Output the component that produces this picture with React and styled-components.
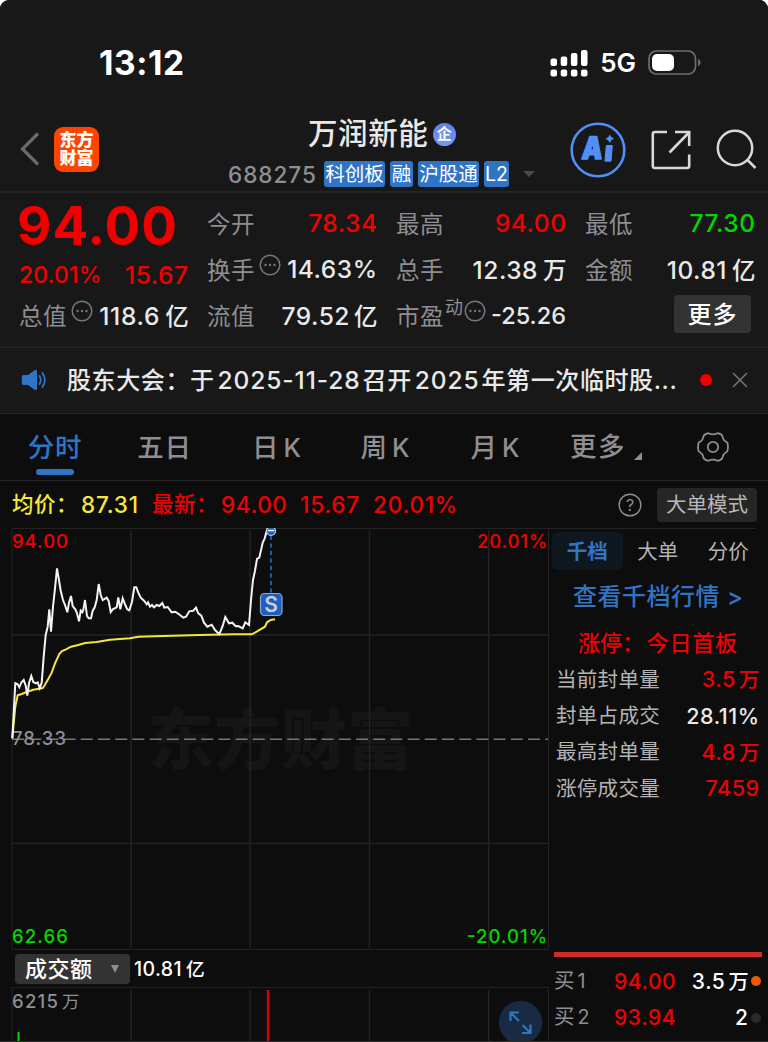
import styled, {createGlobalStyle} from "styled-components";

const GlobalStyle = createGlobalStyle`
  * {
    box-sizing: border-box;
  }

  body {
    margin: 0;
    background: #fff;
    font-family: Inter, "Noto Sans CJK SC", sans-serif;
  }

  svg {
    display: block;
    flex: none;
  }
`;

const Screen = styled.div`
  width: 768px;
  height: 1042px;
  overflow: hidden;
  background: #0d0d0d;
  border-radius: 9px 9px 0 0;
  border-bottom: 1px solid #303030;
  color: #e9e9e9;
  white-space: nowrap;
`;

const Text = styled.span`
  display: block;
  flex: none;
  font-size: ${({$size}) => $size}px;
  font-weight: ${({$weight}) => $weight || 500};
  color: ${({$color}) => $color || "#e9e9e9"};
  letter-spacing: ${({$ls}) => $ls || 0}px;
  margin-right: ${({$ls}) => -($ls || 0)}px;
  line-height: 1.2;
`;

// status bar

const StatusBar = styled.div`
  height: 110px;
  padding: 16px 67px 0 99px;
  display: flex;
  align-items: center;
  justify-content: space-between;
  background: #181818;
`;

const StatusIcons = styled.div`
  display: flex;
  align-items: center;
  gap: 12px;
`;

// header

const Header = styled.header`
  height: 83px;
  padding: 0 11px 0 20px;
  display: flex;
  background: #181818;
  border-bottom: 2px solid #252525;
`;

const HeaderLeft = styled.div`
  width: 208px;
  display: flex;
  align-items: center;
  gap: 14px;
  padding-bottom: 3px;
`;

const Logo = styled.div`
  width: 45px;
  height: 45px;
  border-radius: 9px;
  background: #ff4400;
  color: #fff;
  font-size: 17px;
  font-weight: 800;
  line-height: 18.5px;
  text-align: center;
  padding-top: 4px;
  white-space: pre-line;
`;

const HeaderCenter = styled.div`
  width: 308px;
  padding-top: 6px;
`;

const TitleRow = styled.div`
  height: 36px;
  display: flex;
  align-items: center;
  gap: 5px;
  padding-left: 80px;
`;

const Badge = styled.span`
  width: 23px;
  height: 23px;
  border-radius: 50%;
  background: linear-gradient(#5c80ee, #7598f2);
  color: #fff;
  font-size: 15px;
  font-weight: 700;
  line-height: 22px;
  text-align: center;
`;

const TagRow = styled.div`
  height: 44px;
  display: flex;
  align-items: center;
  gap: 5px;
`;

const Code = styled.div`
  width: 91px;
`;

const Tag = styled.span`
  width: ${({$w}) => $w}px;
  height: 26px;
  border-radius: 3px;
  background: #3074c6;
  color: #fff;
  font-size: 19.5px;
  line-height: 26px;
  text-align: center;
`;

const Caret = styled.span`
  margin-left: 9px;
  border: 6.5px solid transparent;
  border-top-color: #4a4a4a;
  border-bottom: 0;
`;

const HeaderRight = styled.div`
  flex: 1;
  display: flex;
  align-items: center;
  justify-content: space-between;
  padding: 0 0 2px 34px;
`;

// quote

const Quote = styled.section`
  height: 155px;
  padding: 7px 13px 0 19px;
  display: grid;
  grid-template-columns: 169px 170px 170px 170px;
  grid-template-rows: repeat(3, 46px);
  column-gap: 19px;
  background: #181818;
  border-bottom: 2px solid #202020;
`;

const PriceBlock = styled.div`
  grid-row: span 2;
  display: flex;
  flex-direction: column;
`;

const Price = styled.div`
  flex: none;
  height: 52px;
  margin-left: -2px;
  font-size: 53px;
  font-weight: 750;
  line-height: 53px;
  letter-spacing: 1px;
  color: #f00000;
`;

const Change = styled.div`
  flex: none;
  height: 46px;
  display: flex;
  align-items: center;
  justify-content: space-between;
`;

const Cell = styled.div`
  display: flex;
  align-items: center;
  justify-content: space-between;
`;

const Label = styled.span`
  display: flex;
  align-items: center;
  font-size: 23.5px;
  letter-spacing: 0.5px;
  color: #8e8e93;

  svg {
    margin: -9px 0 0 4px;
  }
`;

const Sup = styled.sup`
  font-size: 18px;
  line-height: 18px;
  margin: -14px -4px 0 1px;
`;

const Num = styled.span`
  font-size: ${({$size}) => $size || 24.5}px;
  font-weight: 500;
  letter-spacing: ${({$ls}) => $ls ?? 0.5}px;
  margin-right: ${({$ls}) => -($ls ?? 0.5)}px;
  color: ${({$color}) => $color || "#e9e9e9"};
`;

const Unit = styled.span`
  margin-left: ${({$gap}) => $gap || 4}px;
  letter-spacing: 0;
  font-size: 0.96em;
`;

const MoreButton = styled.button`
  width: 77px;
  height: 38px;
  margin: -3px 4px 0 auto;
  padding: 0;
  border: 0;
  border-radius: 4px;
  background: #333;
  color: #fff;
  font: 500 24px/39px Inter, "Noto Sans CJK SC", sans-serif;
  letter-spacing: 1px;
`;

// notice

const Notice = styled.div`
  height: 66px;
  padding: 0 20px 1px 21px;
  display: flex;
  align-items: center;
  background: #181818;
  border-bottom: 1px solid #262626;
`;

const NoticeText = styled.div`
  flex: none;
  width: 653px;
  padding: 0 0 3px 20px;
  font-size: 24px;
  font-weight: 500;
  letter-spacing: 0.6px;
`;

const Digits = styled.span`
  margin: 0 2px 0 3px;
  font-size: 24.5px;
  letter-spacing: 0.9px;
`;

const CloseButton = styled.div`
  flex: none;
  margin-left: 20px;
`;

const Dot = styled.span`
  flex: none;
  width: ${({$size}) => $size}px;
  height: ${({$size}) => $size}px;
  border-radius: 50%;
  background: ${({$color}) => $color};
`;

// period tabs

const Tabs = styled.nav`
  height: 67px;
  display: flex;
  border-bottom: 1px solid #262626;
`;

const Tab = styled.div`
  width: ${({$w}) => $w}px;
  padding-top: 16px;
  display: flex;
  flex-direction: column;
  align-items: center;
  font-size: 26.5px;
  font-weight: 500;
  line-height: 34px;
  letter-spacing: 0.8px;
  color: ${({$active}) => $active ? "#3074c6" : "#8e8e93"};

  &:after {
    content: "";
    width: 38px;
    height: 6px;
    margin-top: 5px;
    border-radius: 3px;
    background: ${({$active}) => $active ? "#3074c6" : "transparent"};
  }
`;

const TabMore = styled.div`
  width: 86px;
  height: 66px;
  margin-left: 16px;
  display: flex;
  align-items: center;
  gap: 9px;
`;

const Corner = styled.span`
  margin-top: 18px;
  border-style: solid;
  border-width: 0 0 8px 8px;
  border-color: transparent transparent #8e8e93;
`;

const Gear = styled.div`
  padding: 17px 0 0 40.5px;
`;

// info line above the chart

const InfoRow = styled.div`
  height: 47px;
  padding: 0 11px 0 12px;
  display: flex;
  align-items: center;
`;

const InfoItem = styled.div`
  width: ${({$w}) => $w}px;
`;

const ModeButton = styled.button`
  width: 100px;
  height: 34px;
  margin: 1px 0 0 15px;
  padding: 0;
  border: 0;
  border-radius: 4px;
  background: #262626;
  color: #b8b8b8;
  font: 400 20.5px/34px Inter, "Noto Sans CJK SC", sans-serif;
`;

// body

const Body = styled.div`
  height: 514px;
  display: flex;
`;

const ChartColumn = styled.div`
  width: 549px;
`;

const VolumeHeader = styled.div`
  height: 37px;
  padding: 1px 0 0 15px;
  display: flex;
  align-items: center;
  gap: 4px;
`;

const Select = styled.div`
  width: 115px;
  height: 30px;
  padding: 0 11px 0 10px;
  display: flex;
  align-items: center;
  justify-content: space-between;
  border-radius: 4px;
  background: #333;

  &:after {
    content: "";
    border: 4.5px solid transparent;
    border-top: 8px solid #8e8e93;
    border-bottom: 0;
  }
`;

const VolumeTotal = styled.div`
  padding-top: 2px;
`;

const Side = styled.aside`
  width: 219px;
  display: flex;
  flex-direction: column;
`;

const SideTabs = styled.div`
  width: 207px;
  height: 43px;
  padding: 3px 0 0 3px;
  border-top: 1px solid #242424;
  display: flex;
`;

const SideTab = styled.div`
  width: 70.5px;
  height: 38px;
  flex: none;
  border-radius: 6px;
  background: ${({$active}) => $active ? "#10181f" : "none"};
  color: ${({$active}) => $active ? "#3074c6" : "#b4b4b4"};
  font-size: 20.5px;
  font-weight: ${({$active}) => $active ? 700 : 400};
  line-height: 40px;
  text-align: center;
`;

const SideLink = styled.div`
  height: 53px;
  padding-left: 24px;
  display: flex;
  align-items: center;
`;

const LimitTitle = styled.div`
  height: 38px;
  padding-left: 29px;
  display: flex;
  align-items: center;
  justify-content: space-between;
  padding-right: 31px;
`;

const Stat = styled.div`
  height: 36.3px;
  padding: 0 9px 0 7px;
  display: flex;
  align-items: center;
  justify-content: space-between;
`;

const Orders = styled.div`
  margin: auto 0 6px;
  padding-left: 5px;
`;

const OrderBar = styled.div`
  width: 208px;
  height: 5px;
  margin-bottom: 6px;
  background: #cc2c2c;
`;

const Order = styled.div`
  height: 36.5px;
  display: grid;
  grid-template-columns: 60px 62px 72px 13px;
  align-items: center;
`;

const Right = styled.div`
  display: flex;
  justify-content: flex-end;
`;

const RED = "#f00000";
const GREEN = "#00d900";
const GREY = "#8e8e93";

const PRICE = [
    [37, 655], [46, 490], [53, 493], [58, 502], [64, 488], [71, 480], [77, 497], [82, 527], [87, 490], [94, 468],
    [100, 486], [107, 490], [113, 487], [119, 505], [125, 488], [131, 410], [137, 345], [143, 320], [148, 268],
    [153, 335], [159, 260], [165, 205], [171, 145], [176, 175], [182, 212], [189, 240], [195, 255], [202, 277],
    [207, 248], [213, 228], [218, 258], [226, 268], [231, 280], [237, 304], [242, 272], [247, 277], [250, 270],
    [255, 240], [261, 288], [266, 295], [273, 295], [278, 272], [284, 262], [290, 240], [296, 192], [302, 225],
    [308, 240], [320, 233], [326, 243], [332, 276], [338, 268], [350, 262], [355, 232], [361, 268], [368, 235],
    [376, 255], [382, 268], [388, 271], [396, 245], [403, 202], [409, 202], [415, 218], [422, 233], [432, 242],
    [440, 253], [444, 247], [450, 260], [456, 255], [462, 262], [470, 255], [478, 258], [487, 249], [493, 263],
    [503, 261], [515, 277], [526, 275], [540, 285], [550, 293], [558, 290], [568, 274], [580, 272], [588, 263],
    [595, 280], [604, 287], [612, 308], [622, 320], [635, 314], [645, 330], [658, 343], [668, 318], [676, 291],
    [687, 310], [697, 308], [707, 319], [715, 318], [728, 325], [736, 307], [747, 315], [753, 240], [759, 180],
    [765, 152], [771, 117], [778, 113], [788, 68], [794, 55], [801, 30], [806, 22],
];

const AVERAGE = [
    [37, 655], [46, 560], [53, 526], [65, 522], [82, 515], [100, 509], [128, 504], [135, 494], [143, 480],
    [155, 458], [165, 430], [178, 402], [186, 393], [198, 388], [213, 380], [235, 375], [255, 369], [290, 366],
    [330, 359], [390, 355], [415, 350], [490, 348], [600, 345], [700, 343], [755, 343], [765, 338], [780, 329],
    [795, 320], [801, 307], [812, 300], [825, 298],
];

// points are stored in thirds of a pixel, with 24 above the top edge
const toPoints = (list) => list.map(([x, y]) => `${(x / 3).toFixed(1)},${((y - 24) / 3).toFixed(1)}`).join(" ");

const Signal = () => (
    <svg width="38" height="27" viewBox="0 0 38 27" fill="#fff">
        <rect x="0.5" y="8.5" width="6.5" height="7.5" rx="2"/>
        <rect x="10.7" y="6.5" width="6.5" height="9.5" rx="2"/>
        <rect x="20.9" y="3" width="6.5" height="13" rx="2"/>
        <rect x="31" y="0" width="6.5" height="16" rx="2"/>
        <rect x="0.5" y="19.5" width="6.5" height="7" rx="2"/>
        <rect x="10.7" y="19.5" width="6.5" height="7" rx="2"/>
        <rect x="20.9" y="19.5" width="6.5" height="7" rx="2"/>
        <rect x="31" y="19.5" width="6.5" height="7" rx="2"/>
    </svg>
);

const Battery = () => (
    <svg width="53" height="26" viewBox="0 0 53 26">
        <rect x="1" y="1" width="46.5" height="23" rx="7.5" fill="none" stroke="#6e6e6e" strokeWidth="1.7"/>
        <rect x="4" y="4" width="22" height="17" rx="5" fill="#fff"/>
        <path d="M50 9c1.5.6 2.6 2 2.6 3.5s-1.1 2.9-2.6 3.5z" fill="#6e6e6e"/>
    </svg>
);

const Back = () => (
    <svg width="20" height="34" viewBox="0 0 20 34" fill="none" stroke="#6a6a6a" strokeWidth="3.2">
        <path d="M18 1.5 2.5 17 18 32.5"/>
    </svg>
);

const AiIcon = () => (
    <svg width="56" height="56" viewBox="0 0 56 56">
        <circle cx="28" cy="28" r="26.3" fill="none" stroke="#508ff5" strokeWidth="2.6"/>
        <text x="14.5" y="37.5" fontSize="31" fontWeight="900" fill="#508ff5" stroke="#508ff5" strokeWidth="1.6"
              strokeLinejoin="round" textLength="20.5" lengthAdjust="spacingAndGlyphs"
              transform="skewX(-5)">A</text>
        <path d="M36.300 23.500h6l-1.300 15.700h-6z" fill="#508ff5" stroke="#508ff5" strokeLinejoin="round"/>
        <path d="M39.800 12.500q1 3.200 4.200 4.300-3.200 1-4.200 4.300-1-3.200-4.200-4.300 3.200-1 4.200-4.300z" fill="#508ff5"/>
    </svg>
);

const Share = () => (
    <svg width="40" height="40" viewBox="0 0 40 40" fill="none" stroke="#d8d8d8" strokeWidth="2.6">
        <path d="M16 2H4Q1.800 2 1.800 4v32q0 2 2.200 2h32q2.200 0 2.200-2V24.500"/>
        <path d="M24 2h14.200v14M38 2.500 18.500 22.500"/>
    </svg>
);

const Search = () => (
    <svg width="41" height="41" viewBox="0 0 41 41" fill="none" stroke="#d8d8d8" strokeWidth="2.5">
        <circle cx="19" cy="19" r="17.2"/>
        <path d="M31 30.5 39.5 39"/>
    </svg>
);

const Info = () => (
    <svg width="22" height="22" viewBox="0 0 22 22" fill="#77777b">
        <circle cx="11" cy="11" r="9.8" fill="none" stroke="#77777b" strokeWidth="1.5"/>
        <circle cx="6.5" cy="11" r="1.2"/>
        <circle cx="11" cy="11" r="1.2"/>
        <circle cx="15.5" cy="11" r="1.2"/>
    </svg>
);

const Speaker = () => (
    <svg width="26" height="22" viewBox="0 0 26 22">
        <path d="M2.5 6H7l6.500-4.800q2.500-1.200 2.500 1v17.600q0 2.200-2.500 1L7 16H2.500Q.8 16 .8 14.300V7.700Q.8 6 2.500 6z"
              fill="#3074c6"/>
        <path d="M18.500 7q2.600 4 0 8M21.500 4q4.800 7 0 14" fill="none" stroke="#3074c6" strokeWidth="1.8"
              strokeLinecap="round"/>
    </svg>
);

const Close = () => (
    <svg width="16" height="16" viewBox="0 0 16 16" stroke="#77777b" strokeWidth="1.5">
        <path d="M1 1l14 14M15 1L1 15"/>
    </svg>
);

const Settings = () => (
    <svg width="32" height="32" viewBox="0 0 32 32" fill="none" stroke="#8e8e93" strokeWidth="1.8"
         strokeLinejoin="round">
        <path d="M11.500 2.200Q16 4.600 20.500 2.200q4 .8 5 3 .3 4 4.800 6.300 1.300 4.500 0 9-4.500 2.300-4.800 6.300-1 2.200-5 3-4.500-2.400-9 0-4-.8-5-3-.3-4-4.800-6.300-1.300-4.500 0-9Q6.200 9.200 6.500 5.200q1-2.200 5-3z"/>
        <circle cx="16" cy="16" r="5.2"/>
    </svg>
);

const Help = () => (
    <svg width="24" height="24" viewBox="0 0 24 24">
        <circle cx="12" cy="12" r="10.8" fill="none" stroke="#8e8e93" strokeWidth="1.4"/>
        <text x="12" y="17.5" fontSize="16" textAnchor="middle" fill="#8e8e93">?</text>
    </svg>
);

const PriceChart = () => (
    <svg width="549" height="422" viewBox="0 0 549 422" fontWeight="500" fontSize="18.5">
        <text x="148" y="236" fontSize="66" fontWeight="900" fill="#151515" textLength="265">东方财富</text>
        <g stroke="#232323" strokeWidth="1.5" fill="none">
            <path d="M131 2.500v417M250 2.500v417M369.500 2.500v417M488.700 2.500v417"/>
            <path d="M12 107h536M12 315.500h536M12 421.500h536" />
            <path d="M12 .5h536.500v421.500M12 .5v421" strokeWidth="1"/>
        </g>
        <path d="M12 211.300h536" stroke="#77777b" strokeWidth="1.4" strokeDasharray="12 5.2"/>
        <text x="12" y="19.5" fill={RED} textLength="56">94.00</text>
        <text x="477" y="19.5" fill={RED} textLength="70">20.01%</text>
        <text x="12" y="217" fill={GREY} textLength="54">78.33</text>
        <text x="12" y="414.5" fill={GREEN} textLength="56">62.66</text>
        <text x="467" y="414.5" fill={GREEN} textLength="80">-20.01%</text>
        <polyline points={toPoints(AVERAGE)} fill="none" stroke="#f5e63c" strokeWidth="2"/>
        <polyline points={toPoints(PRICE)} fill="none" stroke="#f4f4f4" strokeWidth="2"/>
        <path d="M271 8v57" stroke="#2263c4" strokeWidth="1.8" strokeDasharray="4 3.5"/>
        <circle cx="271" cy="3" r="4.5" fill="#2263c4" stroke="#c5d7ef" strokeWidth="1.2"/>
        <path d="M268 2.500h6" stroke="#fff" strokeWidth="1.4"/>
        <rect x="260.5" y="65.5" width="21.5" height="22" rx="4" fill="#1d5fc4" stroke="#8ea6c8" strokeWidth="1.2"/>
        <text x="271.2" y="84" fontSize="21" fontWeight="600" fill="#cfcfcf" textAnchor="middle">S</text>
    </svg>
);

const VolumeChart = () => (
    <svg width="549" height="55" viewBox="0 0 549 55" fontWeight="500" fontSize="18.5">
        <g stroke="#232323" strokeWidth="1.5" fill="none">
            <path d="M131 3v52M250 3v52M369.500 3v52M488.700 3v52"/>
            <path d="M12 .5h536.500M12 .5V55M548.500 0V55" strokeWidth="1"/>
        </g>
        <path d="M18.500 45v10" stroke="#00d900" strokeWidth="2"/>
        <path d="M268 3v52" stroke="#e00000" strokeWidth="2.2"/>
        <text x="12" y="21" fill={GREY} textLength="46">6215</text>
        <text x="62" y="21" fontSize="17.5" fontWeight="400" fill={GREY}>万</text>
        <circle cx="520.5" cy="35.5" r="21.7" fill="#182b42"/>
        <path d="M519 34 510.500 25.500M510.500 34v-8.500h8.500M522.500 38l8 8M530.500 37.500V46H522" fill="none"
              stroke="#3074c6" strokeWidth="2.2"/>
    </svg>
);

const STATS = [
    {label: "当前封单量", value: "3.5", unit: "万", color: RED},
    {label: "封单占成交", value: "28.11%", color: "#e9e9e9"},
    {label: "最高封单量", value: "4.8", unit: "万", color: RED},
    {label: "涨停成交量", value: "7459", color: RED},
];

const App = () => {
    return (
        <>
            <GlobalStyle/>
            <Screen>
                <StatusBar>
                    <Text $size={33.5} $weight={750} $ls={0.6} $color="#fff">13:12</Text>
                    <StatusIcons>
                        <Signal/>
                        <Text $size={26} $weight={600} $color="#fff">5G</Text>
                        <Battery/>
                    </StatusIcons>
                </StatusBar>

                <Header>
                    <HeaderLeft>
                        <Back/>
                        <Logo>{"东方\n财富"}</Logo>
                    </HeaderLeft>
                    <HeaderCenter>
                        <TitleRow>
                            <Text $size={29.5} $weight={500} $ls={0.6}>万润新能</Text>
                            <Badge>企</Badge>
                        </TitleRow>
                        <TagRow>
                            <Code><Text $size={22.5} $weight={500} $ls={1} $color={GREY}>688275</Text></Code>
                            <Tag $w={61}>科创板</Tag>
                            <Tag $w={23}>融</Tag>
                            <Tag $w={61}>沪股通</Tag>
                            <Tag $w={25}>L2</Tag>
                            <Caret/>
                        </TagRow>
                    </HeaderCenter>
                    <HeaderRight>
                        <AiIcon/>
                        <Share/>
                        <Search/>
                    </HeaderRight>
                </Header>

                <Quote>
                    <PriceBlock>
                        <Price>94.00</Price>
                        <Change>
                            <Num $color={RED} $size={23} $ls={0.1}>20.01%</Num>
                            <Num $color={RED}>15.67</Num>
                        </Change>
                    </PriceBlock>
                    <Cell><Label>今开</Label><Num $color={RED}>78.34</Num></Cell>
                    <Cell><Label>最高</Label><Num $color={RED}>94.00</Num></Cell>
                    <Cell><Label>最低</Label><Num $color={GREEN}>77.30</Num></Cell>
                    <Cell><Label>换手<Info/></Label><Num>14.63%</Num></Cell>
                    <Cell><Label>总手</Label><Num>12.38<Unit $gap={5}>万</Unit></Num></Cell>
                    <Cell><Label>金额</Label><Num>10.81<Unit $gap={5}>亿</Unit></Num></Cell>
                    <Cell><Label>总值<Info/></Label><Num $ls={0.7}>118.6<Unit $gap={5}>亿</Unit></Num></Cell>
                    <Cell><Label>流值</Label><Num>79.52<Unit>亿</Unit></Num></Cell>
                    <Cell><Label>市盈<Sup>动</Sup><Info/></Label><Num $size={23.5} $ls={0}>-25.26</Num></Cell>
                    <Cell><MoreButton>更多</MoreButton></Cell>
                </Quote>

                <Notice>
                    <Speaker/>
                    <NoticeText>
                        股东大会：于<Digits>2025-11-28</Digits>召开<Digits>2025</Digits>年第一次临时股...
                    </NoticeText>
                    <Dot $size={12} $color={RED}/>
                    <CloseButton><Close/></CloseButton>
                </Notice>

                <Tabs>
                    <Tab $w={110} $active>分时</Tab>
                    <Tab $w={109}>五日</Tab>
                    <Tab $w={115}><span>日<Unit $gap={4}>K</Unit></span></Tab>
                    <Tab $w={102}><span>周<Unit $gap={4}>K</Unit></span></Tab>
                    <Tab $w={118}><span>月<Unit $gap={4}>K</Unit></span></Tab>
                    <TabMore>
                        <Text $size={26.5} $ls={1.5} $color={GREY}>更多</Text>
                        <Corner/>
                    </TabMore>
                    <Gear><Settings/></Gear>
                </Tabs>

                <InfoRow>
                    <InfoItem $w={69}><Text $size={21.5} $ls={0.5} $color="#f5e63c">均价：</Text></InfoItem>
                    <InfoItem $w={71}><Text $size={22.5} $ls={0.8} $color="#f5e63c">87.31</Text></InfoItem>
                    <InfoItem $w={69}><Text $size={21.5} $ls={0.5} $color={RED}>最新：</Text></InfoItem>
                    <InfoItem $w={79}><Text $size={22.5} $ls={0.6} $color={RED}>94.00</Text></InfoItem>
                    <InfoItem $w={73}><Text $size={22.5} $ls={0.8} $color={RED}>15.67</Text></InfoItem>
                    <InfoItem $w={245}><Text $size={22.5} $ls={0.8} $color={RED}>20.01%</Text></InfoItem>
                    <Help/>
                    <ModeButton>大单模式</ModeButton>
                </InfoRow>

                <Body>
                    <ChartColumn>
                        <PriceChart/>
                        <VolumeHeader>
                            <Select><Text $size={22} $color="#fff" $ls={0.5}>成交额</Text></Select>
                            <VolumeTotal>
                                <Text $size={19.5} $ls={0.4} $color="#fff">10.81<Unit>亿</Unit></Text>
                            </VolumeTotal>
                        </VolumeHeader>
                        <VolumeChart/>
                    </ChartColumn>

                    <Side>
                        <SideTabs>
                            <SideTab $active>千档</SideTab>
                            <SideTab>大单</SideTab>
                            <SideTab>分价</SideTab>
                        </SideTabs>
                        <SideLink><Text $size={24} $weight={500} $ls={0.5} $color="#3074c6">查看千档行情 &gt;</Text></SideLink>
                        <LimitTitle>
                            <Text $size={22} $color={RED} $weight={500}>涨停：</Text>
                            <Text $size={22} $color={RED} $weight={500} $ls={0.8}>今日首板</Text>
                        </LimitTitle>
                        {STATS.map(({label, value, unit, color}) => (
                            <Stat key={label}>
                                <Text $size={20.5} $weight={400} $ls={0.3} $color="#b4b4b4">{label}</Text>
                                <Text $size={21.5} $ls={0.5} $color={color}>{value}{unit && <Unit $gap={3}>{unit}</Unit>}</Text>
                            </Stat>
                        ))}
                        <Orders>
                            <OrderBar/>
                            <Order>
                                <Text $size={20.5} $weight={400} $color={GREY}>买<Unit $gap={3}>1</Unit></Text>
                                <Text $size={21} $ls={0.6} $color={RED}>94.00</Text>
                                <Right><Text $size={21} $ls={0.6} $color="#fff">3.5<Unit $gap={3}>万</Unit></Text></Right>
                                <Right><Dot $size={10} $color="#ee5a00"/></Right>
                            </Order>
                            <Order>
                                <Text $size={20.5} $weight={400} $color={GREY}>买<Unit $gap={3}>2</Unit></Text>
                                <Text $size={21} $ls={0.6} $color={RED}>93.94</Text>
                                <Right><Text $size={21} $color="#fff">2</Text></Right>
                                <Right><Dot $size={10} $color="#2a2a2a"/></Right>
                            </Order>
                        </Orders>
                    </Side>
                </Body>
            </Screen>
        </>
    );
};

export default App;
